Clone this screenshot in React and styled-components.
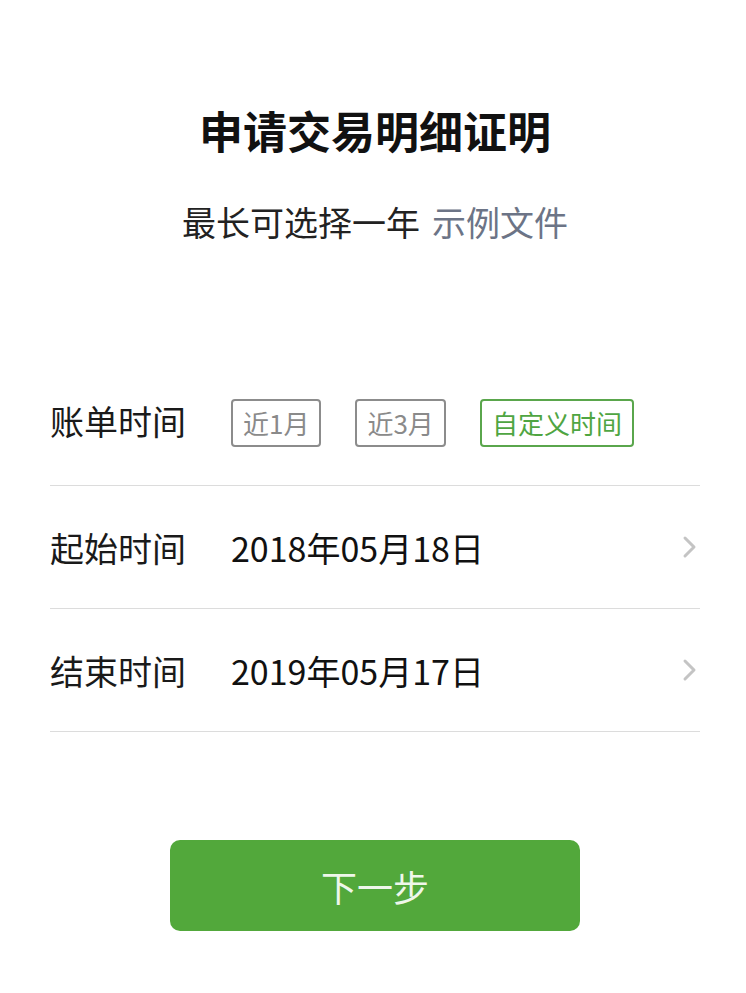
import React, { useState } from 'react';
import styled, { createGlobalStyle } from 'styled-components';

const GlobalStyle = createGlobalStyle`
  body {
    margin: 0;
    background: #fff;
    font-family: "Noto Sans CJK SC", "Noto Sans", sans-serif;
    color: #1a1a1a;
  }
`;

const Page = styled.div`
  display: flex;
  flex-direction: column;
  padding: 100px 46px 60px 50px;
`;

const Title = styled.h1`
  margin: 0;
  text-align: center;
  font-size: 44px;
  line-height: 60px;
  font-weight: 700;
  color: #111;
`;

const Subtitle = styled.p`
  margin: 37px 0 0;
  text-align: center;
  font-size: 34px;
  line-height: 50px;
  color: #222;
`;

const Link = styled.a`
  margin-left: 12px;
  color: #6c7486;
  text-decoration: none;
`;

const List = styled.div`
  margin-top: 116px;
  display: flex;
  flex-direction: column;
`;

const Row = styled.div`
  display: flex;
  align-items: center;
  height: 122px;
  border-bottom: 1px solid #dcdcdc;
`;

const Label = styled.div`
  width: 181px;
  flex-shrink: 0;
  font-size: 34px;
  color: #1a1a1a;
  margin-top: ${(p) => (p.$lift ? '-8px' : '0')};
`;

const Value = styled.div`
  flex: 1;
  font-size: 34px;
  color: #111;
`;

const Chips = styled.div`
  display: flex;
  gap: 34px;
  margin-top: -2px;
`;

const Chip = styled.button`
  height: 48px;
  padding: 0 10px;
  border: 2px solid ${(p) => (p.$active ? '#5aa64c' : '#8c8c8c')};
  border-radius: 4px;
  background: #fff;
  color: ${(p) => (p.$active ? '#4fa542' : '#8a8a8a')};
  font-family: inherit;
  font-size: 26px;
  line-height: 44px;
  cursor: pointer;
`;

const Chevron = styled.svg`
  width: 16px;
  height: 24px;
  margin-right: 2px;
  flex-shrink: 0;
`;

const NextButton = styled.button`
  align-self: center;
  margin-top: 108px;
  width: 410px;
  height: 91px;
  border: none;
  border-radius: 10px;
  background: #52a83b;
  color: #eef7ea;
  font-family: inherit;
  font-size: 36px;
  cursor: pointer;
`;

const ranges = ['近1月', '近3月', '自定义时间'];

const Arrow = () => (
  <Chevron viewBox="0 0 16 24">
    <path d="M3 3 L12 12 L3 21" fill="none" stroke="#c4c4c4" strokeWidth="3" strokeLinecap="round" strokeLinejoin="round" />
  </Chevron>
);

const App = () => {
  const [range, setRange] = useState(2);

  return (
    <Page>
      <GlobalStyle />
      <Title>申请交易明细证明</Title>
      <Subtitle>
        最长可选择一年<Link href="#">示例文件</Link>
      </Subtitle>

      <List>
        <Row>
          <Label $lift>账单时间</Label>
          <Chips>
            {ranges.map((r, i) => (
              <Chip key={r} $active={range === i} onClick={() => setRange(i)}>
                {r}
              </Chip>
            ))}
          </Chips>
        </Row>
        <Row>
          <Label>起始时间</Label>
          <Value>2018年05月18日</Value>
          <Arrow />
        </Row>
        <Row>
          <Label>结束时间</Label>
          <Value>2019年05月17日</Value>
          <Arrow />
        </Row>
      </List>

      <NextButton>下一步</NextButton>
    </Page>
  );
};

export default App;
